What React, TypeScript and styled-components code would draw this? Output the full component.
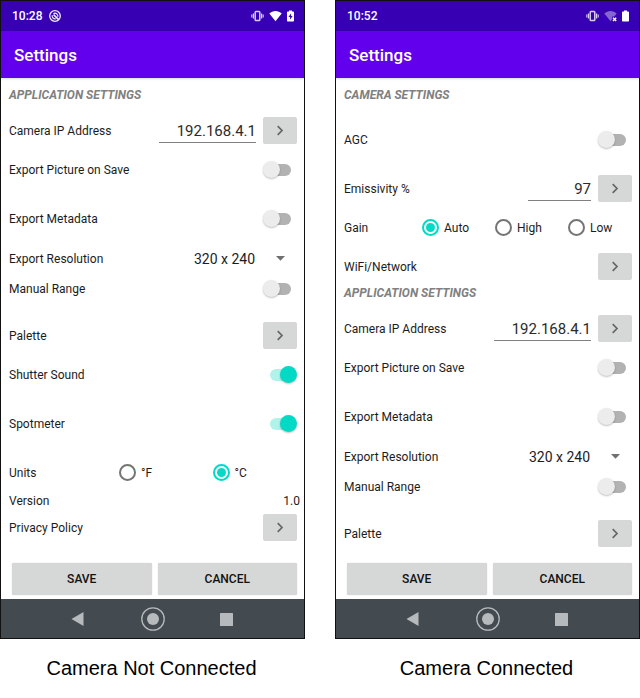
import React, { useId, useState } from "react";
import styled, { createGlobalStyle } from "styled-components";

const GlobalStyle = createGlobalStyle`
  *, *::before, *::after { box-sizing: border-box; }
  body {
    margin: 0;
    background: #fff;
    font-family: Roboto, "Liberation Sans", sans-serif;
    color: #1c1c1c;
  }
  button, input, select { font-family: inherit; margin: 0; }
`;

const Page = styled.main`
  display: grid;
  grid-template-columns: 1fr 1fr;
  column-gap: 30px;
`;

const Figure = styled.figure`
  display: flex;
  flex-direction: column;
  margin: 0;
`;

const Caption = styled.figcaption`
  padding: 16px 2px 18px 0;
  font: 20px/26px "Liberation Sans", Arial, sans-serif;
  color: #000;
  text-align: center;
`;

const Phone = styled.div`
  flex: 1;
  display: flex;
  flex-direction: column;
  border: 1px solid #111;
`;

const StatusBar = styled.div`
  display: flex;
  align-items: center;
  gap: 7px;
  height: 30px;
  padding: 0 10px 0 11px;
  background: #3700b3;
  color: #fff;
  font-size: 12px;
  font-weight: 500;
  svg { display: block; }
`;

const StatusIcons = styled.div`
  display: flex;
  align-items: center;
  gap: 5px;
  margin-left: auto;
`;

const AppBar = styled.header`
  display: flex;
  align-items: center;
  height: 47px;
  padding: 0 13px;
  background: #6200ee;
  box-shadow: 0 1px 2px rgba(0, 0, 0, 0.15);
`;

const Title = styled.h1`
  margin: 0;
  font-size: 17px;
  font-weight: 500;
  color: #fff;
`;

const Content = styled.div`
  flex: 1;
  display: flex;
  flex-direction: column;
  padding: 4px 7px 16px 8px;
`;

const SectionTitle = styled.h2`
  margin: 0;
  font-size: 12px;
  line-height: 27px;
  font-weight: 700;
  font-style: italic;
  color: #808080;
`;

const Row = styled.div<{ $gap: number; $short?: boolean }>`
  display: flex;
  align-items: center;
  gap: 7px;
  height: ${(p) => (p.$short ? 24 : 27)}px;
  margin-top: ${(p) => p.$gap}px;
`;

const Label = styled.label`
  flex: 1;
  font-size: 12px;
`;

const GroupLabel = styled.span<{ $width: number }>`
  flex: 0 0 ${(p) => p.$width}px;
  margin-right: -7px;
  font-size: 12px;
`;

const Value = styled.output`
  margin-right: -3px;
  font-size: 12px;
`;

const Field = styled.input<{ $width: number }>`
  width: ${(p) => p.$width}px;
  height: 25px;
  padding: 2px 0 0;
  border: 0;
  border-bottom: 1px solid #808080;
  border-radius: 0;
  background: none;
  font-size: 15px;
  color: #2b2b2b;
  text-align: right;
  outline: none;
`;

const ArrowButton = styled.button`
  display: grid;
  place-items: center;
  width: 34px;
  height: 27px;
  padding: 0;
  border: 0;
  border-radius: 2px;
  background: #d6d7d7;
  cursor: pointer;
`;

const Switch = styled.input`
  appearance: none;
  display: grid;
  align-items: center;
  width: 34px;
  height: 18px;
  cursor: pointer;
  &::before, &::after { content: ""; grid-area: 1 / 1; }
  &::before {
    justify-self: center;
    width: 21px;
    height: 12px;
    border-radius: 6px;
    background: #b2b2b2;
  }
  &::after {
    width: 17px;
    height: 17px;
    border-radius: 50%;
    background: #ececec;
    box-shadow: 0 1px 2px rgba(0, 0, 0, 0.25);
  }
  &:checked::before { background: #b0f3ea; }
  &:checked::after { justify-self: end; background: #03dac5; }
`;

const SelectBox = styled.div`
  display: grid;
  align-items: center;
  width: 103px;
  > * { grid-area: 1 / 1; }
  svg { justify-self: end; margin-right: 12px; pointer-events: none; }
`;

const Select = styled.select`
  appearance: none;
  width: 100%;
  height: 27px;
  padding: 0;
  border: 0;
  background: none;
  font-size: 14px;
  color: #1c1c1c;
`;

const Options = styled.div`
  flex: 1;
  display: grid;
  grid-auto-flow: column;
  grid-auto-columns: 1fr;
  column-gap: 9px;
`;

const Option = styled.label`
  display: flex;
  align-items: center;
  gap: 5px;
  font-size: 12px;
`;

const Radio = styled.input`
  appearance: none;
  flex: none;
  display: grid;
  place-items: center;
  width: 17px;
  height: 17px;
  border: 2px solid #757575;
  border-radius: 50%;
  &:checked { border-color: #03dac5; }
  &:checked::before {
    content: "";
    width: 9px;
    height: 9px;
    border-radius: 50%;
    background: #03dac5;
  }
`;

const Actions = styled.div`
  display: grid;
  grid-template-columns: 1fr 1fr;
  column-gap: 6px;
  padding: 0 7px 4px 11px;
`;

const ActionButton = styled.button`
  height: 32px;
  padding: 0;
  border: 0;
  border-radius: 2px;
  background: #d6d7d7;
  box-shadow: 0 0 1px rgba(0, 0, 0, 0.3);
  font-size: 12px;
  font-weight: 500;
  color: #111;
  cursor: pointer;
`;

const NavBar = styled.nav`
  display: flex;
  justify-content: center;
  align-items: center;
  gap: 50px;
  height: 39px;
  background: #434b50;
`;

const NavButton = styled.button`
  width: 24px;
  height: 24px;
  padding: 0;
  border: 0;
  background: none;
  svg { display: block; }
`;

const ACCENT_ICON = "#b6babc";

function QIcon() {
  return (
    <svg width="12" height="12" viewBox="0 0 12 12" fill="none" stroke="#f1ecfb" aria-hidden="true">
      <circle cx="6" cy="6" r="5.3" strokeWidth="1.3" />
      <path d="M6.8 8.7A2.8 2.8 0 0 1 3.300 5.200M4.400 3.700A2.800 2.800 0 0 1 8.700 6.800" strokeWidth="1.2" />
      <path d="M4.600 4.600L9.600 9.600" strokeWidth="1.5" />
    </svg>
  );
}

function VibrateIcon() {
  return (
    <svg width="13" height="12" viewBox="0 0 13 12" fill="none" stroke="#d8ccf2" aria-hidden="true">
      <rect x="4.200" y="1.500" width="4.600" height="9" rx="0.800" strokeWidth="1.500" />
      <path d="M2.400 3.500v5M10.600 3.500v5" strokeWidth="1.200" />
      <path d="M0.800 4.600v2.800M12.200 4.600v2.800" strokeWidth="1.100" />
    </svg>
  );
}

function WifiIcon({ off }: { off?: boolean }) {
  return (
    <svg width="13" height="12" viewBox="0 0 13 12" aria-hidden="true">
      <path d="M6.500 11.200L0.300 3.400C2 1.900 4.200 1 6.500 1s4.500.9 6.200 2.400z" fill={off ? "#8465d2" : "#fff"} />
      {off && (
        <>
          <path d="M8 6.600h5V12H8z" fill="#3700b3" />
          <path d="M9 7.700l3.200 3.200M12.200 7.700L9 10.900" stroke="#fff" strokeWidth="1.400" />
        </>
      )}
    </svg>
  );
}

function BatteryIcon({ charging }: { charging?: boolean }) {
  return (
    <svg width="7" height="12" viewBox="0 0 7 12" aria-hidden="true">
      <path d="M2 0.500h3v1h1.200c.5 0 .8.300.8.800v8.400c0 .5-.3.800-.8.800H.8c-.5 0-.8-.3-.8-.8V2.300c0-.5.3-.8.8-.8H2z" fill="#fff" />
      {charging && <path d="M4.100 3.200L1.500 7h1.600v2.800L5.600 6H4.100z" fill="#3700b3" />}
    </svg>
  );
}

function Arrow({ label }: { label: string }) {
  return (
    <ArrowButton type="button" aria-label={label}>
      <svg width="8" height="11" viewBox="0 0 8 11" fill="none" aria-hidden="true">
        <path d="M1.700 1.200L6 5.500 1.700 9.800" stroke="#666" strokeWidth="1.700" />
      </svg>
    </ArrowButton>
  );
}

function FieldRow({ gap, label, initial, width }: { gap: number; label: string; initial: string; width: number }) {
  const id = useId();
  const [value, setValue] = useState(initial);
  return (
    <Row $gap={gap}>
      <Label htmlFor={id}>{label}</Label>
      <Field id={id} $width={width} value={value} onChange={(e) => setValue(e.target.value)} />
      <Arrow label={`Edit ${label}`} />
    </Row>
  );
}

function LinkRow({ gap, label }: { gap: number; label: string }) {
  return (
    <Row $gap={gap}>
      <Label as="span">{label}</Label>
      <Arrow label={label} />
    </Row>
  );
}

function SwitchRow({ gap, label, on }: { gap: number; label: string; on?: boolean }) {
  const id = useId();
  return (
    <Row $gap={gap}>
      <Label htmlFor={id}>{label}</Label>
      <Switch id={id} type="checkbox" role="switch" defaultChecked={on} />
    </Row>
  );
}

function RadioRow({ gap, label, labelWidth, options, selected }: {
  gap: number; label: string; labelWidth: number; options: string[]; selected: string;
}) {
  const id = useId();
  return (
    <Row $gap={gap} role="radiogroup" aria-labelledby={id}>
      <GroupLabel id={id} $width={labelWidth}>{label}</GroupLabel>
      <Options>
        {options.map((option) => (
          <Option key={option}>
            <Radio type="radio" name={id} defaultChecked={option === selected} />
            {option}
          </Option>
        ))}
      </Options>
    </Row>
  );
}

function ResolutionRow({ gap }: { gap: number }) {
  const id = useId();
  return (
    <Row $gap={gap}>
      <Label htmlFor={id}>Export Resolution</Label>
      <SelectBox>
        <Select id={id}>
          <option>320 x 240</option>
        </Select>
        <svg width="9" height="5" viewBox="0 0 9 5" aria-hidden="true">
          <path d="M0 0h9L4.500 4.700z" fill="#707070" />
        </svg>
      </SelectBox>
    </Row>
  );
}

function ApplicationSettings() {
  return (
    <>
      <SectionTitle>APPLICATION SETTINGS</SectionTitle>
      <FieldRow gap={8} label="Camera IP Address" initial="192.168.4.1" width={97} />
      <SwitchRow gap={12} label="Export Picture on Save" />
      <SwitchRow gap={22} label="Export Metadata" />
      <ResolutionRow gap={13} />
      <SwitchRow gap={3} label="Manual Range" />
      <LinkRow gap={20} label="Palette" />
    </>
  );
}

function Screen({ time, connected, caption, children }: {
  time: string; connected?: boolean; caption: string; children: React.ReactNode;
}) {
  return (
    <Figure>
      <Phone>
        <StatusBar>
          <span>{time}</span>
          {!connected && <QIcon />}
          <StatusIcons>
            <VibrateIcon />
            <WifiIcon off={connected} />
            <BatteryIcon charging={!connected} />
          </StatusIcons>
        </StatusBar>
        <AppBar>
          <Title>Settings</Title>
        </AppBar>
        <Content>{children}</Content>
        <Actions>
          <ActionButton type="button">SAVE</ActionButton>
          <ActionButton type="button">CANCEL</ActionButton>
        </Actions>
        <NavBar>
          <NavButton type="button" aria-label="Back">
            <svg width="24" height="24" viewBox="0 0 24 24"><path d="M16.500 5v14L4.500 12z" fill={ACCENT_ICON} /></svg>
          </NavButton>
          <NavButton type="button" aria-label="Home">
            <svg width="24" height="24" viewBox="0 0 24 24">
              <circle cx="12" cy="12" r="11.200" fill="none" stroke={ACCENT_ICON} strokeWidth="1.300" />
              <circle cx="12" cy="12" r="6" fill={ACCENT_ICON} />
            </svg>
          </NavButton>
          <NavButton type="button" aria-label="Recent apps">
            <svg width="24" height="24" viewBox="0 0 24 24"><rect x="5" y="6" width="13" height="13" rx="0.500" fill={ACCENT_ICON} /></svg>
          </NavButton>
        </NavBar>
      </Phone>
      <Caption>{caption}</Caption>
    </Figure>
  );
}

export default function App() {
  return (
    <>
      <GlobalStyle />
      <Page>
        <Screen time="10:28" caption="Camera Not Connected">
          <ApplicationSettings />
          <SwitchRow gap={12} label="Shutter Sound" on />
          <SwitchRow gap={22} label="Spotmeter" on />
          <RadioRow gap={22} label="Units" labelWidth={110} options={["°F", "°C"]} selected="°C" />
          <Row $gap={3} $short>
            <Label as="span">Version</Label>
            <Value>1.0</Value>
          </Row>
          <LinkRow gap={1} label="Privacy Policy" />
        </Screen>
        <Screen time="10:52" connected caption="Camera Connected">
          <SectionTitle>CAMERA SETTINGS</SectionTitle>
          <SwitchRow gap={17} label="AGC" />
          <FieldRow gap={22} label="Emissivity %" initial="97" width={63} />
          <RadioRow gap={12} label="Gain" labelWidth={78} options={["Auto", "High", "Low"]} selected="Auto" />
          <LinkRow gap={12} label="WiFi/Network" />
          <ApplicationSettings />
        </Screen>
      </Page>
    </>
  );
}
